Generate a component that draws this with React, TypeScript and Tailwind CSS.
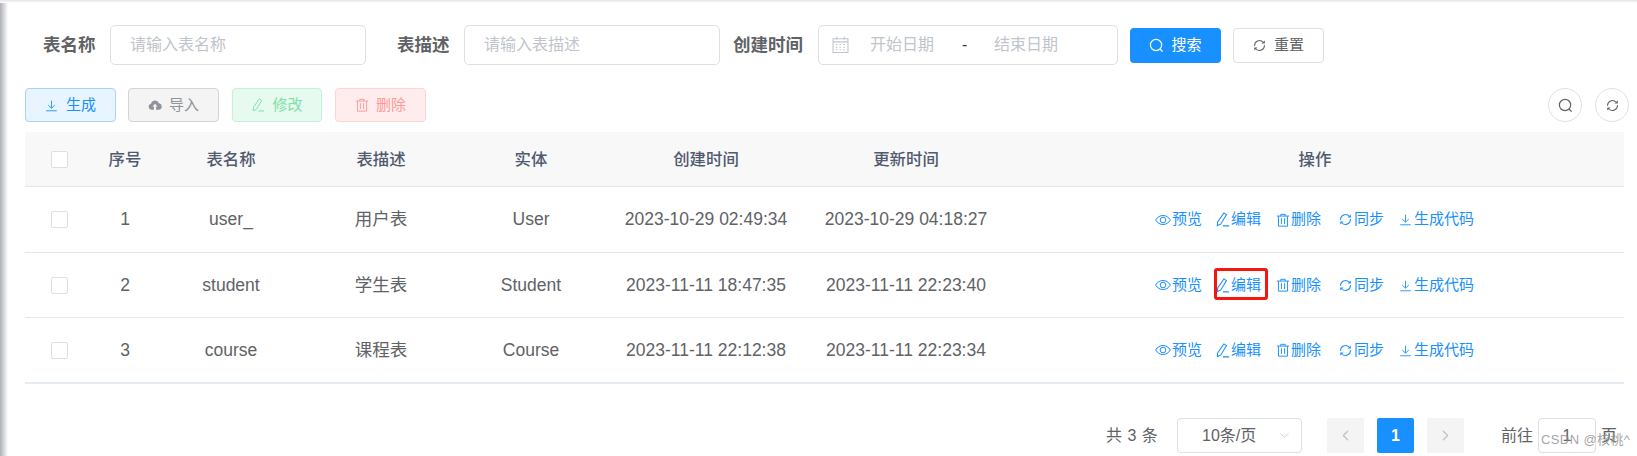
import { ChevronLeft, ChevronRight, ChevronDown } from "lucide-react";

const font = { fontFamily: '"Liberation Sans", "Noto Sans CJK SC", sans-serif' };

function IconSearch({ size = 15 }: { size?: number }) {
  return (
    <svg width={size} height={size} viewBox="0 0 16 16" fill="none" stroke="currentColor" strokeWidth="1.3">
      <circle cx="7.500" cy="7.500" r="6" />
      <path d="M12 12l2.500 2.500" />
    </svg>
  );
}

function IconDownload({ size = 15 }: { size?: number }) {
  return (
    <svg width={size} height={size} viewBox="0 0 16 16" fill="none" stroke="currentColor" strokeWidth="1.1">
      <path d="M8 2v9M4 7.500 8 11.300l4-3.800M1.500 14.500h13" />
    </svg>
  );
}

function IconEdit({ size = 15 }: { size?: number }) {
  return (
    <svg width={size} height={size} viewBox="0 0 16 16" fill="none" stroke="currentColor" strokeWidth="1.1">
      <path d="M9.500 1 12.300 2.800 6 13l-3.500 1.500.3-3.800zM8.500 14.800H15" />
    </svg>
  );
}

function IconTrash({ size = 15 }: { size?: number }) {
  return (
    <svg width={size} height={size} viewBox="0 0 16 16" fill="none" stroke="currentColor" strokeWidth="1.1">
      <path d="M1 3.500h14M5.500 3.500V1.500h5v2M2.800 3.500V15h10.400V3.500M6.200 6v6.500M9.800 6v6.500" />
    </svg>
  );
}

function IconEye({ size = 16 }: { size?: number }) {
  return (
    <svg width={size} height={size} viewBox="0 0 16 16" fill="none" stroke="currentColor" strokeWidth="1">
      <path d="M.6 8C2.500 5 5 3.500 8 3.500S13.500 5 15.400 8C13.500 11 11 12.500 8 12.500S2.500 11 .6 8z" />
      <circle cx="8" cy="8" r="2.800" />
    </svg>
  );
}

// two arcs with a blob at the end, as the element-ui refresh glyph
function IconRefresh({ size = 14 }: { size?: number }) {
  return (
    <svg width={size} height={size} viewBox="0 0 16 16" fill="none" stroke="currentColor" strokeWidth="1.3">
      <path d="M2 8.500A6 6 0 0 1 12.500 4M14 7.500A6 6 0 0 1 3.500 12" />
      <path d="M14.500 5.500 10.500 5.500 14.500 1.800z" fill="currentColor" stroke="none" />
      <path d="M1.500 10.500 5.500 10.500 1.500 14.200z" fill="currentColor" stroke="none" />
    </svg>
  );
}

function IconCloud() {
  return (
    <svg width="14" height="14" viewBox="0 0 16 16" fill="currentColor">
      <path d="M4 13.500A3.500 3.500 0 0 1 3.500 6.600 4.700 4.700 0 0 1 12.500 6a3.800 3.800 0 0 1 0 7.500H9.200V9.700h1.800L8 6.500 5 9.700h1.800v3.800z" />
    </svg>
  );
}

function IconDate() {
  return (
    <svg className="-mt-[2px]" width="17" height="17" viewBox="0 0 16 16" fill="none" stroke="currentColor" strokeWidth="1">
      <path d="M1 2.500h14v13H1zM1 5.500h14M4.500.5v3M11.500.5v3" />
      <path d="M3.500 8h1.500M7 8h1.500M10.500 8H12M3.500 10.500h1.500M7 10.500h1.500M10.500 10.500H12M3.500 13h1.500M7 13h1.500M10.500 13H12" />
    </svg>
  );
}

const rows = [
  { id: 1, name: "user_", desc: "用户表", entity: "User", created: "2023-10-29 02:49:34", updated: "2023-10-29 04:18:27" },
  { id: 2, name: "student", desc: "学生表", entity: "Student", created: "2023-11-11 18:47:35", updated: "2023-11-11 22:23:40" },
  { id: 3, name: "course", desc: "课程表", entity: "Course", created: "2023-11-11 22:12:38", updated: "2023-11-11 22:23:34" },
];

const gridCols = "grid grid-cols-[69px_62px_150px_150px_150px_200px_200px_618px] items-center text-center";
const rowHeights = ["h-[66px] border-b border-[#dfe6ec]", "h-[65px] border-b border-[#dfe6ec]", "h-[66px] border-b-2 border-[#e6ebf5]"];

function Checkbox() {
  return <span className="block mx-auto w-[17px] h-[17px] bg-white border border-[#dcdfe6] rounded-[2px]" />;
}

function Actions() {
  return (
    <div className="flex items-center justify-center gap-[15px] pr-[1px] text-[15px] text-[#1890ff]">
      <span className="-mr-[2px] flex items-center gap-[1px]"><IconEye />预览</span>
      <span className="flex items-center gap-[1px]"><IconEdit />编辑</span>
      <span className="flex items-center gap-[1px]"><IconTrash size={14} />删除</span>
      <span className="ml-[3px] flex items-center gap-[2px]"><IconRefresh size={13} />同步</span>
      <span className="flex items-center gap-[2px]"><IconDownload size={13} />生成代码</span>
    </div>
  );
}

export default function App() {
  return (
    <div className="relative w-[1637px] h-[456px] overflow-hidden bg-white" style={font}>
      <div className="absolute inset-y-0 left-0 w-[8px] bg-gradient-to-r from-[#aeb1b7] to-white" />
      <div className="absolute inset-x-0 top-0 h-[3px] bg-gradient-to-b from-[#e4e4e4] to-white" />

      {/* search form */}
      <div className="flex items-center pt-[25px] pl-[43px] h-[65px] whitespace-nowrap">
        <label className="w-[52px] text-[17.5px] font-bold text-[#606266]">表名称</label>
        <div className="ml-[15px] w-[256px] h-[40px] border border-[#dcdfe6] rounded-[5px] pl-[19px] flex items-center text-[16px] text-[#c0c4cc]">请输入表名称</div>
        <label className="ml-[31px] w-[52px] text-[17.5px] font-bold text-[#606266]">表描述</label>
        <div className="ml-[15px] w-[256px] h-[40px] border border-[#dcdfe6] rounded-[5px] pl-[19px] flex items-center text-[16px] text-[#c0c4cc]">请输入表描述</div>
        <label className="ml-[13px] w-[70px] text-[17.5px] font-bold text-[#606266]">创建时间</label>
        <div className="ml-[15px] w-[300px] h-[40px] border border-[#dcdfe6] rounded-[5px] pl-[13px] flex items-center text-[16px] text-[#c0c4cc]">
          <IconDate />
          <span className="ml-[21px] w-[64px]">开始日期</span>
          <span className="ml-[28px] w-[5px] text-[#303133]">-</span>
          <span className="ml-[27px] w-[64px]">结束日期</span>
        </div>
        <button className="ml-[12px] w-[91px] h-[35px] flex items-center justify-center gap-[7px] rounded-[4px] bg-[#1890ff] text-white text-[15px]">
          <IconSearch />搜索
        </button>
        <button className="ml-[12px] w-[91px] h-[35px] flex items-center justify-center gap-[8px] rounded-[4px] border border-[#dcdfe6] text-[#606266] text-[15px]">
          <IconRefresh size={13} />重置
        </button>
      </div>

      {/* toolbar */}
      <div className="flex items-center justify-between mt-[23px] ml-[25px] w-[1604px] h-[34px]">
        <div className="flex items-center gap-[12px] text-[15px]">
          <button className="w-[91px] h-[34px] flex items-center justify-center gap-[8px] rounded-[4px] border border-[#a3d3ff] bg-[#e8f4ff] text-[#1890ff]">
            <IconDownload size={13} />生成
          </button>
          <button className="w-[91px] h-[34px] flex items-center justify-center gap-[7px] rounded-[4px] border border-[#d3d4d6] bg-[#f4f4f5] text-[#909399]">
            <IconCloud />导入
          </button>
          <button className="ml-[1px] w-[90px] h-[34px] flex items-center justify-center gap-[7px] rounded-[4px] border border-[#c2f2d8] bg-[#e7faf0] text-[#7fe0a8]">
            <IconEdit size={14} />修改
          </button>
          <button className="ml-[1px] w-[91px] h-[34px] flex items-center justify-center gap-[7px] rounded-[4px] border border-[#ffd4d4] bg-[#ffeded] text-[#ff9a9a]">
            <IconTrash size={14} />删除
          </button>
        </div>
        <div className="flex items-center gap-[13px] text-[#606266]">
          <span className="w-[34px] h-[34px] rounded-full border border-[#dfe1e8] flex items-center justify-center"><IconSearch /></span>
          <span className="w-[34px] h-[34px] rounded-full border border-[#dfe1e8] flex items-center justify-center"><IconRefresh size={13} /></span>
        </div>
      </div>

      {/* table */}
      <div className="relative mt-[10px] ml-[25px] w-[1599px] text-[17.5px] text-[#606266]">
        <div className={`${gridCols} h-[55px] bg-[#f8f8f9] border-b border-[#dfe6ec] font-medium text-[#515a6e] text-[16.4px]`}>
          <Checkbox />
          <span>序号</span>
          <span>表名称</span>
          <span>表描述</span>
          <span>实体</span>
          <span>创建时间</span>
          <span>更新时间</span>
          <span>操作</span>
        </div>
        {rows.map((r, i) => (
          <div key={r.id} className={`${gridCols} ${rowHeights[i]}`}>
            <Checkbox />
            <span>{r.id}</span>
            <span>{r.name}</span>
            <span>{r.desc}</span>
            <span>{r.entity}</span>
            <span className="whitespace-nowrap">{r.created}</span>
            <span className="whitespace-nowrap">{r.updated}</span>
            <Actions />
          </div>
        ))}
      </div>

      {/* pagination */}
      <div className="flex items-center mt-[34px] pl-[1106px] h-[35px] text-[16px] text-[#606266]">
        <span className="w-[52px] whitespace-nowrap [word-spacing:1px]">共 3 条</span>
        <div className="ml-[19px] w-[125px] h-[35px] border border-[#dcdfe6] rounded-[4px] pl-[24px] pr-[9px] flex items-center justify-between">
          <span>10条/页</span>
          <ChevronDown size={15} strokeWidth={1.2} className="text-[#c0c4cc]" />
        </div>
        <button className="ml-[25px] w-[37px] h-[35px] rounded-[2px] bg-[#f4f4f5] flex items-center justify-center text-[#c0c4cc]"><ChevronLeft size={17} /></button>
        <button className="ml-[13px] w-[37px] h-[35px] rounded-[2px] bg-[#1890ff] text-white font-bold flex items-center justify-center">1</button>
        <button className="ml-[13px] w-[37px] h-[35px] rounded-[2px] bg-[#f4f4f5] flex items-center justify-center text-[#c0c4cc]"><ChevronRight size={17} /></button>
        <span className="ml-[37px] w-[32px] whitespace-nowrap">前往</span>
        <div className="ml-[5px] w-[58px] h-[35px] border border-[#dcdfe6] rounded-[4px] flex items-center justify-center">1</div>
        <span className="ml-[5px]">页</span>
      </div>

      {/* annotation + watermark */}
      <div className="absolute left-[1214px] top-[268px] w-[54px] h-[32px] border-[3px] border-[#f5160f] rounded-[3px]" />
      <div className="absolute left-[1541px] top-[432px] text-[13px] leading-[16px] tracking-[0.4px] text-[#8c8c8c]/80 whitespace-nowrap">CSDN @核桃^</div>
    </div>
  );
}
